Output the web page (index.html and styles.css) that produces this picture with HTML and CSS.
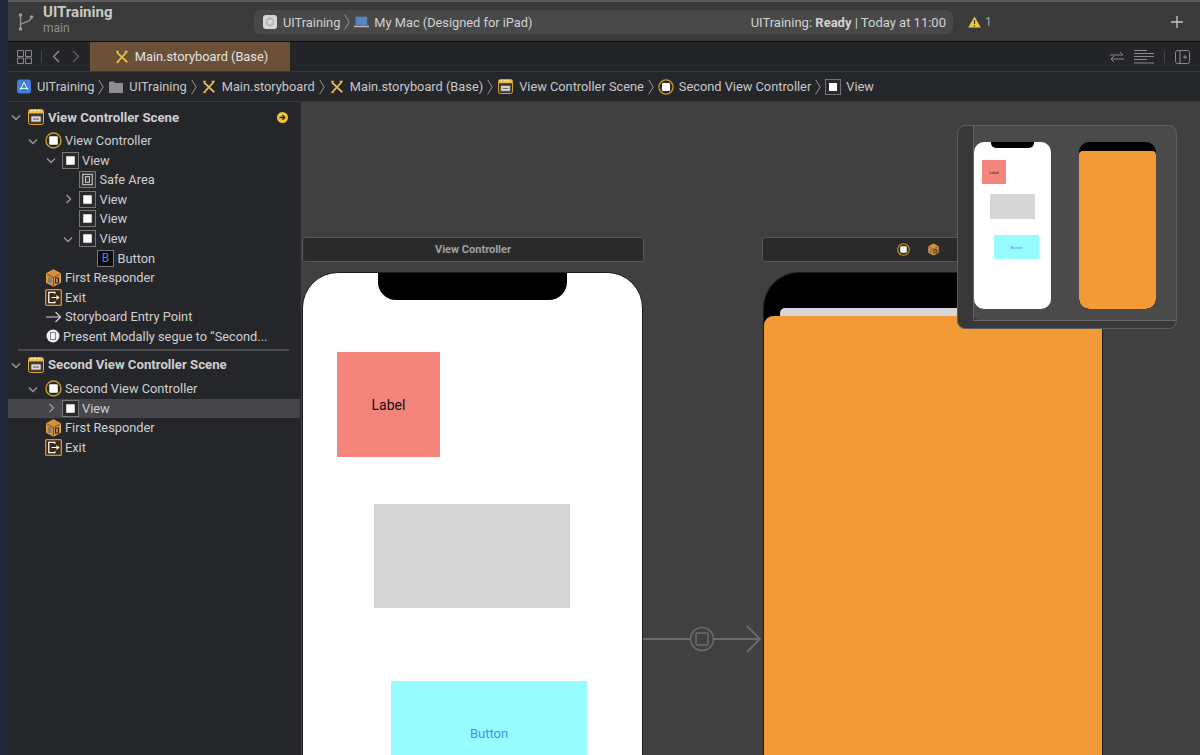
FILE: index.html
```html
<!DOCTYPE html>
<html lang="en">
<head>
  <meta charset="UTF-8" />
  <title>Main.storyboard</title>
  <link rel="stylesheet" href="styles.css">
</head>
<body>
  <svg class="defs" width="0" height="0">
    <symbol id="chev" viewBox="0 0 6 16"><path d="M.7.8 5.2 8 .7 15.2" fill="none" stroke="#999" stroke-width="1"/></symbol>
    <symbol id="x-file" viewBox="0 0 16 16"><path d="M2 2.500 14 14M13.500 2 3 13.500" fill="none" stroke="#e8bd4e" stroke-width="2"/><path d="M1.500 1.500h3M11 1.500h3.500M1.500 14.500l3-1" fill="none" stroke="#e8bd4e" stroke-width="1.500"/></symbol>
    <symbol id="scene" viewBox="0 0 16 16"><rect x=".5" y=".5" width="15" height="15" rx="2" fill="#3b3226" stroke="#e3a83b"/><rect x="1" y="1" width="14" height="3.500" fill="#f0c04f"/><path d="M3 1.500h1.500M6.500 1.500H8M10 1.500h1.500" stroke="#fff" stroke-width="1"/><rect x="3" y="7" width="10" height="6" fill="#d9d9d9" stroke="#555" stroke-width=".8"/><path d="M5 10h6" stroke="#555"/></symbol>
    <symbol id="vc" viewBox="0 0 18 18"><circle cx="9" cy="9" r="8" fill="#2b2a24" stroke="#c9982e" stroke-width="1.500"/><rect x="4.500" y="4.500" width="9" height="9" rx="1" fill="#fff"/></symbol>
    <symbol id="view" viewBox="0 0 18 18"><rect x=".5" y=".5" width="17" height="17" fill="#2a2a2c" stroke="#7c7c7c" stroke-width="1"/><rect x="4.500" y="4.500" width="9" height="9" fill="#fff"/></symbol>
    <symbol id="safe" viewBox="0 0 18 18"><rect x=".5" y=".5" width="17" height="17" fill="#333" stroke="#7c7c7c" stroke-width="1"/><rect x="4" y="3.500" width="10" height="11" fill="none" stroke="#ddd"/><rect x="7" y="6" width="4" height="6" fill="none" stroke="#ddd"/></symbol>
    <symbol id="btn" viewBox="0 0 18 18"><rect x=".5" y=".5" width="17" height="17" fill="#0c0c10" stroke="#7c7c7c" stroke-width="1"/></symbol>
    <symbol id="cube" viewBox="0 0 16 18"><path d="M8 .8 15 4.500v9L8 17.200 1 13.500v-9Z" fill="#d98f3a" stroke="#e9a04a"/><path d="M1.500 5 8 8.500 14.500 5M8 8.500V17" fill="none" stroke="#7a4d1c"/><rect x="2.500" y="8" width="3.500" height="6" fill="#8a7a66"/><rect x="9.500" y="8.500" width="4" height="6" fill="#2d2118"/><path d="M11.500 9.500v4" stroke="#fff" stroke-width="1"/></symbol>
    <symbol id="exit" viewBox="0 0 18 18"><rect x=".7" y=".7" width="16.600" height="16.600" rx="1" fill="#3a2a18" stroke="#d98f3a" stroke-width="1.400"/><path d="M10.500 5V3.500H4v11h6.500V13" fill="none" stroke="#fff" stroke-width="1.300"/><path d="M7 9h7M12 7l2.500 2-2.500 2" fill="none" stroke="#fff" stroke-width="1.300"/></symbol>
    <symbol id="row-arrow" viewBox="0 0 10 10"><path d="M1 3.500 5 7.500 9 3.500" fill="none" stroke="#9a9a9a" stroke-width="1.400"/></symbol>
  </svg>

  <div class="window">
    <header class="toolbar">
      <svg class="branch" width="16" height="20" viewBox="0 0 16 20"><circle cx="2.500" cy="3" r="1.800" fill="#9a9a9a"/><circle cx="2.500" cy="17" r="1.800" fill="#9a9a9a"/><circle cx="13.500" cy="5" r="1.800" fill="#9a9a9a"/><path d="M2.500 3v14M2.500 13c0-3 11-2 11-8" fill="none" stroke="#9a9a9a" stroke-width="1.300"/></svg>
      <div class="project">
        <strong>UITraining</strong>
        <span>main</span>
      </div>
      <div class="scheme">
        <svg class="app-icon" width="14" height="14" viewBox="0 0 14 14"><rect width="14" height="14" rx="3" fill="#d4d6d8"/><circle cx="7" cy="7" r="3.500" fill="none" stroke="#aeb2b6" stroke-width="1.500"/></svg>
        <span class="scheme-name">UITraining</span>
        <svg class="chev" width="6" height="16"><use href="#chev"/></svg>
        <svg class="laptop" width="15" height="12" viewBox="0 0 15 12"><rect x="2" y="1" width="11" height="8" fill="#4d88d0" stroke="#777" stroke-width=".8"/><path d="M0 10.500h15" stroke="#b5b5b5" stroke-width="1.500"/></svg>
        <span class="scheme-dest">My Mac (Designed for iPad)</span>
        <span class="scheme-status">UITraining: <b>Ready</b> | Today at 11:00</span>
      </div>
      <svg class="warn" width="13" height="12" viewBox="0 0 13 12"><path d="M6.500.5 12.800 11.500H.2Z" fill="#f2c644"/><path d="M6.500 4v4M6.500 9v1.300" stroke="#3a3a3a" stroke-width="1.200"/></svg>
      <span class="warn-count">1</span>
      <svg class="plus" width="12" height="12" viewBox="0 0 12 12"><path d="M6 0v12M0 6h12" stroke="#c8c8c8" stroke-width="1.300"/></svg>
    </header>

    <nav class="tabbar">
      <svg class="tab-grid" width="15" height="14" viewBox="0 0 15 14"><path d="M.5.5h6v6h-6zM8.500.5h6v6h-6zM.5 8h6v5.500h-6zM8.500 8h6v5.500h-6z" fill="none" stroke="#8a8a8a"/></svg>
      <i class="tab-sep"></i>
      <svg class="tab-back" width="8" height="13" viewBox="0 0 8 13"><path d="M7 1 1.500 6.500 7 12" fill="none" stroke="#9a9a9a" stroke-width="1.200"/></svg>
      <svg class="tab-fwd" width="8" height="13" viewBox="0 0 8 13"><path d="M1 1l5.500 5.500L1 12" fill="none" stroke="#666" stroke-width="1.200"/></svg>
      <div class="tab">
        <svg width="14" height="14"><use href="#x-file"/></svg>
        <span>Main.storyboard (Base)</span>
      </div>
      <div class="tab-tools">
        <svg width="14" height="14" viewBox="0 0 14 14"><path d="M0 5h13M10 2l3 3M14 9H1M4 6 1 9l3 3" fill="none" stroke="#8a8a8a"/></svg>
        <svg width="20" height="14" viewBox="0 0 20 14"><path d="M0 .5h13M0 3.500h20M0 6.500h20M0 9.500h13M0 13h20" stroke="#8a8a8a"/></svg>
        <i class="tab-sep"></i>
        <svg width="15" height="14" viewBox="0 0 15 14"><rect x=".5" y=".5" width="14" height="13" rx="2" fill="none" stroke="#8a8a8a"/><path d="M5 .5v13M8 7h4M10 5v4" stroke="#8a8a8a"/></svg>
      </div>
    </nav>

    <nav class="crumbs">
      <svg width="14" height="15" viewBox="0 0 15 15"><rect width="15" height="15" rx="3" fill="#3f7fd8"/><path d="M7.500 3 3.500 11M7.500 3l4 8M3 9.500h9" stroke="#fff" stroke-width="1" fill="none"/></svg>
      <span>UITraining</span>
      <svg class="chev" width="6" height="16"><use href="#chev"/></svg>
      <svg width="14" height="12" viewBox="0 0 14 12"><path d="M0 1.500Q0 .5 1 .5h4l1 1.500h8v10H0Z" fill="#8e8e8e"/></svg>
      <span>UITraining</span>
      <svg class="chev" width="6" height="16"><use href="#chev"/></svg>
      <svg width="14" height="14"><use href="#x-file"/></svg>
      <span>Main.storyboard</span>
      <svg class="chev" width="6" height="16"><use href="#chev"/></svg>
      <svg width="14" height="14"><use href="#x-file"/></svg>
      <span>Main.storyboard (Base)</span>
      <svg class="chev" width="6" height="16"><use href="#chev"/></svg>
      <svg width="15" height="15"><use href="#scene"/></svg>
      <span>View Controller Scene</span>
      <svg class="chev tight" width="6" height="16"><use href="#chev"/></svg>
      <svg width="16" height="16"><use href="#vc"/></svg>
      <span class="tight">Second View Controller</span>
      <svg class="chev tight" width="6" height="16"><use href="#chev"/></svg>
      <svg width="16" height="16"><use href="#view"/></svg>
      <span class="tight">View</span>
    </nav>

    <div class="main">
      <aside class="outline">
        <div class="row scene-row lv0">
          <svg class="arrow" width="10" height="10"><use href="#row-arrow"/></svg>
          <svg width="16" height="16"><use href="#scene"/></svg>
          <b>View Controller Scene</b>
          <svg class="go" width="11" height="11" viewBox="0 0 11 11"><circle cx="5.500" cy="5.500" r="5.500" fill="#f2c23e"/><path d="M2.500 5.500h5M5.500 3.200l2.300 2.300-2.300 2.300" fill="none" stroke="#222" stroke-width="1.300"/></svg>
        </div>
        <div class="row lv1"><svg class="arrow" width="10" height="10"><use href="#row-arrow"/></svg><svg width="17" height="17"><use href="#vc"/></svg><span>View Controller</span></div>
        <div class="row lv2"><svg class="arrow" width="10" height="10"><use href="#row-arrow"/></svg><svg width="17" height="17"><use href="#view"/></svg><span>View</span></div>
        <div class="row lv3"><i class="arrow"></i><svg width="17" height="17"><use href="#safe"/></svg><span>Safe Area</span></div>
        <div class="row lv3"><svg class="arrow side" width="10" height="10"><use href="#row-arrow"/></svg><svg width="17" height="17"><use href="#view"/></svg><span>View</span></div>
        <div class="row lv3"><i class="arrow"></i><svg width="17" height="17"><use href="#view"/></svg><span>View</span></div>
        <div class="row lv3"><svg class="arrow" width="10" height="10"><use href="#row-arrow"/></svg><svg width="17" height="17"><use href="#view"/></svg><span>View</span></div>
        <div class="row lv4"><i class="arrow"></i><div class="btn-icon"><svg width="17" height="17"><use href="#btn"/></svg><em>B</em></div><span>Button</span></div>
        <div class="row lv1"><i class="arrow"></i><svg width="17" height="18"><use href="#cube"/></svg><span>First Responder</span></div>
        <div class="row lv1"><i class="arrow"></i><svg width="17" height="17"><use href="#exit"/></svg><span>Exit</span></div>
        <div class="row lv1"><i class="arrow"></i><svg width="17" height="12" viewBox="0 0 16 12"><path d="M.5 6H15M10 1l5 5-5 5" fill="none" stroke="#d0d0d0" stroke-width="1.200"/></svg><span>Storyboard Entry Point</span></div>
        <div class="row lv1 segue-row"><i class="arrow"></i><svg width="14" height="14" viewBox="0 0 14 14"><circle cx="7" cy="7" r="6.500" fill="#f2f2f2"/><rect x="4.500" y="3.500" width="5" height="7" fill="none" stroke="#888"/></svg><span>Present Modally segue to “Second...</span></div>
        <hr class="divider">
        <div class="row scene-row lv0">
          <svg class="arrow" width="10" height="10"><use href="#row-arrow"/></svg>
          <svg width="16" height="16"><use href="#scene"/></svg>
          <b>Second View Controller Scene</b>
        </div>
        <div class="row lv1"><svg class="arrow" width="10" height="10"><use href="#row-arrow"/></svg><svg width="17" height="17"><use href="#vc"/></svg><span>Second View Controller</span></div>
        <div class="row lv2 selected"><svg class="arrow side" width="10" height="10"><use href="#row-arrow"/></svg><svg width="17" height="17"><use href="#view"/></svg><span>View</span></div>
        <div class="row lv1"><i class="arrow"></i><svg width="17" height="18"><use href="#cube"/></svg><span>First Responder</span></div>
        <div class="row lv1"><i class="arrow"></i><svg width="17" height="17"><use href="#exit"/></svg><span>Exit</span></div>
      </aside>

      <section class="canvas">
        <div class="scene-bar first">View Controller</div>
        <div class="phone first">
          <div class="notch"></div>
          <div class="box red">Label</div>
          <div class="box gray"></div>
          <div class="box cyan">Button</div>
        </div>

        <svg class="segue" width="120" height="46" viewBox="0 0 120 46"><path d="M0 23h47M71 23h46M104 10l13 13-13 13" fill="none" stroke="#6b6b6b" stroke-width="1.800"/><circle cx="59" cy="23" r="11.500" fill="none" stroke="#6b6b6b" stroke-width="1.500"/><rect x="53" y="17" width="12" height="12" rx="1" fill="none" stroke="#6b6b6b" stroke-width="1.500"/></svg>

        <div class="scene-bar second">
          <svg width="13" height="13"><use href="#vc"/></svg>
          <svg width="11" height="13"><use href="#cube"/></svg>
        </div>
        <div class="phone second">
          <div class="under"></div>
          <div class="orange"></div>
        </div>

        <div class="minimap">
          <div class="mini-phone mini-a">
            <div class="mini-notch"></div>
            <div class="mini-box mini-red">Label</div>
            <div class="mini-box mini-gray"></div>
            <div class="mini-box mini-cyan">Button</div>
          </div>
          <div class="mini-phone mini-b"><div class="mini-orange"></div></div>
        </div>
      </section>
    </div>
  </div>
</body>
</html>
```

FILE: styles.css
```css
* {
  box-sizing: border-box;
}

html, body {
  height: 100%;
}

body {
  margin: 0;
  background: #1d2838;
  color: #d6d6d6;
  font-family: Roboto, "Liberation Sans", sans-serif;
  font-size: 12.8px;
  overflow: hidden;
}

.defs {
  display: block;
  height: 0;
}

.window {
  margin-left: 8px;
  height: 755px;
  display: flex;
  flex-direction: column;
  overflow: hidden;
}

/* top toolbar */
.toolbar {
  height: 42px;
  flex: none;
  display: flex;
  align-items: center;
  background: #3a3a3b;
  border-top: 2px solid #5c5c5c;
  border-bottom: 1px solid #0e0e0e;
  padding-left: 10px;
}

.branch {
  margin-right: 9px;
}

.project {
  width: 211px;
  display: flex;
  flex-direction: column;
  line-height: 16px;
  margin-top: -3px;
}

.project strong {
  font-size: 15px;
  color: #c8c8c8;
}

.project span {
  font-size: 12px;
  color: #8e8e8e;
}

.scheme {
  width: 699px;
  height: 24px;
  margin-top: 1px;
  background: #484849;
  border-radius: 6px;
  display: flex;
  align-items: center;
  padding: 0 7px 0 9px;
  color: #d2d2d2;
}

.scheme-name {
  margin: 0 4px 0 6px;
}

.laptop {
  margin: 0 5px 0 4px;
}

.scheme-status {
  margin-left: auto;
  font-size: 13px;
}

.scheme-status b {
  font-weight: 700;
}

.warn {
  margin-left: 15px;
}

.warn-count {
  margin-left: 4px;
  font-size: 12px;
  color: #a8a8a8;
}

.plus {
  margin-left: auto;
  margin-right: 17px;
}

/* tabs */
.tabbar {
  height: 30px;
  flex: none;
  display: flex;
  align-items: center;
  background: #242528;
  border-bottom: 1px solid #39393b;
  padding-left: 9px;
}

.tab-grid {
  margin-right: 9px;
}

.tab-sep {
  width: 1px;
  height: 12px;
  background: #444;
}

.tab-back {
  margin-left: 10px;
}

.tab-fwd {
  margin-left: 12px;
  margin-right: 10px;
}

.tab {
  width: 200px;
  height: 29px;
  padding-left: 3px;
  background: #6b5038;
  color: #e2e2e2;
  display: flex;
  align-items: center;
  justify-content: center;
  gap: 6px;
}

.tab-tools {
  margin-left: auto;
  margin-right: 10px;
  display: flex;
  align-items: center;
  gap: 10px;
}

/* jump bar */
.crumbs {
  height: 30px;
  flex: none;
  display: flex;
  align-items: center;
  gap: 4px;
  padding-left: 9px;
  background: #252629;
  color: #c8c8c8;
  border-bottom: 1px solid #39393b;
}

.crumbs .chev {
  margin-right: 1px;
}

.crumbs .chev.tight {
  margin-right: 0;
}

.crumbs span {
  margin-left: 2px;
}

.crumbs span.tight {
  margin-left: 1px;
}

.main {
  flex: 1;
  display: flex;
  min-height: 0;
}

/* document outline */
.outline {
  width: 292px;
  flex: none;
  background: #25262a;
  padding-top: 1px;
}

.row {
  height: 19.55px;
  display: flex;
  align-items: center;
  gap: 3px;
  color: #cfcfcf;
  white-space: nowrap;
}

.row svg {
  flex: none;
}

.scene-row {
  height: 28px;
  gap: 4px;
}

.divider + .scene-row {
  height: 29px;
}

.scene-row b {
  font-size: 13.2px;
  font-weight: 700;
}

.lv0 { padding-left: 3px; }
.lv1 { padding-left: 20px; }
.lv2 { padding-left: 37px; }
.lv3 { padding-left: 54px; }
.lv4 { padding-left: 72px; }

.arrow {
  display: block;
  width: 10px;
  height: 10px;
  flex: none;
  margin-right: 4px;
}

.lv2 .arrow, .lv3 .arrow {
  margin: 0 3px 0 1px;
}

.scene-row .arrow {
  margin-right: 3px;
}

.arrow.side {
  transform: rotate(-90deg);
}

.lv3 span, .lv4 span {
  margin-left: .5px;
}

.segue-row svg {
  margin-left: 1px;
}

.go {
  margin-left: auto;
  margin-right: 12px;
}

.btn-icon {
  position: relative;
  width: 17px;
  height: 17px;
}

.btn-icon em {
  position: absolute;
  inset: 0;
  text-align: center;
  font-style: normal;
  font-size: 12px;
  line-height: 17px;
  color: #4a7fe0;
}

.divider {
  border: 0;
  height: 2px;
  background: #4a4a4c;
  margin: 3px 11px -1px 10px;
}

.selected {
  background: #46464a;
}

/* canvas */
.canvas {
  flex: 1;
  position: relative;
  background: #404040;
  border-left: 1px solid #2c2c2c;
  overflow: hidden;
}

.scene-bar {
  position: absolute;
  top: 135px;
  height: 25px;
  background: #2a2a2a;
  border: 1px solid #555;
  border-radius: 3px;
  display: flex;
  align-items: center;
  justify-content: center;
  font-size: 11px;
  font-weight: 700;
  color: #a0a0a0;
}

.scene-bar.first {
  left: 1px;
  width: 342px;
}

.scene-bar.second {
  left: 461px;
  width: 342px;
  justify-content: flex-start;
  padding-left: 134px;
  gap: 18px;
}

.phone {
  position: absolute;
  top: 170px;
  width: 341px;
  height: 520px;
  border-radius: 36px 36px 0 0;
  overflow: hidden;
  border: 1px solid #1c1c1c;
}

.phone.first {
  left: 1px;
  background: #fff;
}

.phone.second {
  left: 462px;
  width: 340px;
  background: #000;
}

.notch {
  position: absolute;
  left: 75px;
  top: 0;
  width: 189px;
  height: 27px;
  background: #000;
  border-radius: 0 0 18px 18px;
}

.box {
  position: absolute;
  display: flex;
  align-items: center;
  justify-content: center;
}

.red {
  left: 34px;
  top: 79px;
  width: 103px;
  height: 105px;
  background: #f3857d;
  color: #111;
  font-size: 14px;
}

.gray {
  left: 71px;
  top: 231px;
  width: 196px;
  height: 104px;
  background: #d6d6d6;
}

.cyan {
  left: 88px;
  top: 408px;
  width: 196px;
  height: 105px;
  background: #98fcff;
  color: #3f8ef5;
  font-size: 13px;
}

.under {
  position: absolute;
  left: 16px;
  top: 35px;
  right: 0;
  height: 20px;
  border-radius: 5px 0 0 0;
  background: #d6d6d6;
}

.orange {
  position: absolute;
  left: 0;
  right: 0;
  top: 43px;
  bottom: 0;
  background: #f19a37;
  border-radius: 9px 9px 0 0;
}

.segue {
  position: absolute;
  left: 342px;
  top: 514px;
}

/* minimap overlay */
.minimap {
  position: absolute;
  left: 656px;
  top: 23px;
  width: 220px;
  height: 204px;
  background: #4a4a4a;
  border: 1px solid #5e5e5e;
  border-radius: 8px;
  box-shadow: inset 15px -8px 0 #383838;
  overflow: hidden;
}

.minimap::before {
  content: "";
  position: absolute;
  left: 15px;
  top: 0;
  right: 0;
  bottom: 7px;
  border-left: 1px solid #666;
  border-bottom: 1px solid #666;
}

.mini-phone {
  position: absolute;
  top: 16px;
  width: 77px;
  height: 167px;
  border-radius: 10px;
  overflow: hidden;
}

.mini-a {
  left: 16px;
  background: #fff;
}

.mini-b {
  left: 121px;
  background: #000;
}

.mini-notch {
  position: absolute;
  left: 17px;
  top: 0;
  width: 43px;
  height: 6px;
  background: #000;
  border-radius: 0 0 5px 5px;
}

.mini-box {
  position: absolute;
  display: flex;
  align-items: center;
  justify-content: center;
  font-size: 4px;
}

.mini-red {
  left: 8px;
  top: 18px;
  width: 24px;
  height: 24px;
  background: #f3857d;
  color: #222;
}

.mini-gray {
  left: 16px;
  top: 52px;
  width: 45px;
  height: 25px;
  background: #d6d6d6;
}

.mini-cyan {
  left: 20px;
  top: 93px;
  width: 45px;
  height: 24px;
  background: #98fcff;
  color: #3f8ef5;
}

.mini-orange {
  position: absolute;
  left: 0;
  right: 0;
  top: 9px;
  bottom: 0;
  background: #f19a37;
  border-radius: 4px 4px 10px 10px;
}
```
